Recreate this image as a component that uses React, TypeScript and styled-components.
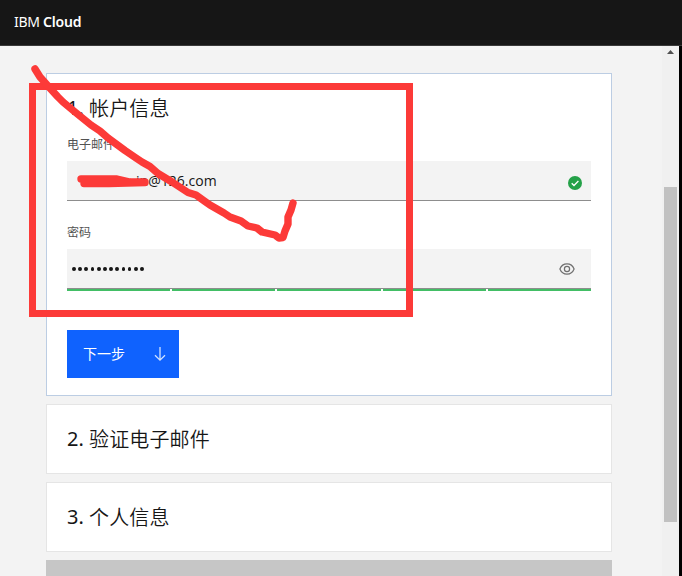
import React from "react";
import styled, { createGlobalStyle } from "styled-components";

const GlobalStyle = createGlobalStyle`
  * { box-sizing: border-box; }
  body { margin: 0; background: #f3f3f3; overflow: hidden; }
`;

const Page = styled.div`
  position: relative;
  display: flex;
  flex-direction: column;
  width: 682px;
  height: 576px;
  overflow: hidden;
  background: #f3f3f3;
  color: #161616;
  font-family: "Open Sans", "Noto Sans CJK SC", sans-serif;
`;

const Header = styled.header`
  flex: none;
  display: flex;
  align-items: center;
  height: 46px;
  padding: 0 14px 1px;
  background: #161616;
  border-bottom: 1px solid #393939;
  color: #fff;
  font: 14px/18px "Noto Sans", sans-serif;
  white-space: pre;
`;

const Brand = styled.span<{ $w: number; $bold?: boolean }>`
  width: ${(p) => p.$w}px;
  font-weight: ${(p) => (p.$bold ? 600 : 400)};
  letter-spacing: ${(p) => (p.$bold ? "-0.15px" : "-0.3px")};
`;

const Body = styled.div`
  flex: 1;
  display: flex;
  min-height: 0;
`;

const Steps = styled.main`
  flex: 1;
  display: flex;
  flex-direction: column;
  gap: 8px;
  padding: 27px 50px 0 46px;
  overflow: hidden;
`;

const Card = styled.section<{ $h: number; $active?: boolean }>`
  flex: none;
  height: ${(p) => p.$h}px;
  padding: 20px;
  background: #fff;
  border: 1px solid ${(p) => (p.$active ? "#bccde3" : "#e5e5e5")};
`;

const Title = styled.h2`
  display: flex;
  margin: 0;
  height: 28px;
  font: 350 20px/28px "Noto Sans CJK SC", sans-serif;
  letter-spacing: 0.15px;
`;

const Num = styled.span`
  width: 22px;
  font-family: "Noto Sans", sans-serif;
  font-weight: 400;
`;

const Label = styled.label<{ $top: number }>`
  display: block;
  margin-top: ${(p) => p.$top}px;
  height: 18px;
  margin-bottom: 7px;
  font-size: 12px;
  line-height: 18px;
  color: #525252;
`;

const Field = styled.div<{ $left: number; $right: number }>`
  display: flex;
  align-items: center;
  justify-content: space-between;
  height: 40px;
  padding: 0 ${(p) => p.$right}px 0 ${(p) => p.$left}px;
  background: #f3f3f3;
  border-bottom: 1px solid #8d8d8d;
  font-size: 14px;
`;

const Valid = styled.svg`
  margin-top: 4px;
`;

const Dots = styled.div`
  display: flex;
  gap: 2.4px;
  i { width: 3.8px; height: 4px; border-radius: 50%; background: #161616; }
`;

const Strength = styled.div`
  display: flex;
  gap: 2px;
  height: 2px;
  span { flex: 1; background: #42be65; }
`;

const Button = styled.button`
  display: flex;
  align-items: center;
  justify-content: space-between;
  width: 112px;
  height: 48px;
  margin-top: 39px;
  padding: 0 12px 0 16px;
  border: 0;
  background: #0f62fe;
  color: #fff;
  font: 14px/18px "Noto Sans CJK SC", sans-serif;
`;

const ButtonText = styled.span`
  padding-bottom: 2px;
`;

const NextCard = styled.div`
  flex: none;
  height: 48px;
  background: #c6c6c6;
`;

const Scrollbar = styled.div`
  width: 17px;
  display: flex;
  flex-direction: column;
  align-items: center;
  background: #f0f0f0;
`;

const Thumb = styled.div`
  width: 13px;
  height: 335px;
  margin-top: 124px;
  background: #c1c1c1;
`;

const Edge = styled.div`
  width: 3px;
  background: #000;
`;

const Markup = styled.svg`
  position: absolute;
  inset: 0;
  pointer-events: none;
`;

const Email = styled.span`
  letter-spacing: 0.02px;
`;

export default function App() {
  return (
    <Page>
      <GlobalStyle />
      <Header>
        <Brand $w={29}>IBM</Brand>
        <Brand $w={40} $bold>Cloud</Brand>
      </Header>
      <Body>
        <Steps>
          <Card $h={323} $active>
            <Title><Num>1.</Num>帐户信息</Title>
            <Label $top={14}>电子邮件</Label>
            <Field $left={69} $right={9}>
              <Email>in@126.com</Email>
              <Valid width="14" height="14" viewBox="0 0 14 14">
                <circle cx="7" cy="7" r="7" fill="#24a148" />
                <path d="M3.7 7.3 6 9.5l4.4-4.5" fill="none" stroke="#fff" strokeWidth="1.3" />
              </Valid>
            </Field>
            <Label $top={23}>密码</Label>
            <Field $left={5} $right={16}>
              <Dots>{Array.from({ length: 12 }, (_, i) => <i key={i} />)}</Dots>
              <svg width="16" height="16" viewBox="0 0 16 16" fill="none" stroke="#6f6f6f" strokeWidth="1.2">
                <path d="M.9 8C2.2 4.7 4.9 2.9 8 2.9S13.8 4.7 15.1 8C13.8 11.3 11.1 13.1 8 13.1S2.2 11.3.9 8Z" />
                <circle cx="8" cy="8" r="2.6" />
              </svg>
            </Field>
            <Strength>{[0, 1, 2, 3, 4].map((i) => <span key={i} />)}</Strength>
            <Button>
              <ButtonText>下一步</ButtonText>
              <svg width="14" height="16" viewBox="0 0 14 16" fill="none" stroke="#d0e2ff" strokeWidth="1.3">
                <path d="M7 1v13M2 9.2l5 5 5-5" />
              </svg>
            </Button>
          </Card>
          <Card $h={70}><Title><Num>2.</Num>验证电子邮件</Title></Card>
          <Card $h={70}><Title><Num>3.</Num>个人信息</Title></Card>
          <NextCard />
        </Steps>
        <Scrollbar>
          <svg width="7" height="17" viewBox="0 0 7 17"><path d="M0 8h7L3.5 4Z" fill="#505050" /></svg>
          <Thumb />
        </Scrollbar>
        <Edge />
      </Body>
      <Markup width="682" height="576" viewBox="0 0 682 576" fill="none" stroke="#fc3a38" strokeWidth="7.4" strokeLinecap="round" strokeLinejoin="round">
        <path d="M32.5 86.5h377v227h-377Z" strokeWidth="7" strokeLinejoin="miter" />
        <path d="M35 69 40 77 48 86 58 97 63 102 75 112 91 125 100 131 108 138 125 150.500 136 158 142 162 150 166.500 158 173.500 172 182 188 192.500 196 195 205 201.500 210 205 224 213 230 217 241 221 248 226 257 228 262 232 275 235 279 238 283 237.500 285 231 288 224V217L291 210 293 203" />
        <path d="M81 179H117L130 182H145M84 183.500H109L145 182.500" />
      </Markup>
    </Page>
  );
}
